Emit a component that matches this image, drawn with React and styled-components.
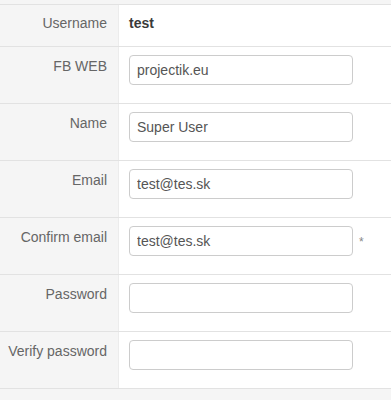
import styled, {createGlobalStyle} from "styled-components";

const GlobalStyle = createGlobalStyle`
  body {
    margin: 0;
    background: #f5f5f5;
    font-family: "Liberation Sans", Arial, sans-serif;
    font-size: 14px;
  }
`;

const Page = styled.div`
  padding-top: 4px;
  width: 391px;
`;

const Table = styled.div`
  border-top: 1px solid #e2e2e2;
  border-bottom: 1px solid #e2e2e2;
`;

const Row = styled.div`
  display: grid;
  grid-template-columns: 119px 1fr;
  height: ${({$h}) => $h}px;
  & + & {
    border-top: 1px solid #e2e2e2;
  }
`;

const Label = styled.div`
  background: #f5f5f5;
  border-right: 1px solid #ececec;
  color: #666;
  text-align: right;
  padding: ${({$top}) => $top}px 11px 0 0;
  line-height: 20px;
`;

const Cell = styled.div`
  background: #fff;
  display: flex;
  align-items: flex-start;
  padding: ${({$top}) => $top}px 0 0 10px;
`;

const Value = styled.span`
  font-weight: bold;
  color: #3a3a3a;
  line-height: 20px;
`;

const Input = styled.input`
  box-sizing: border-box;
  width: 224px;
  height: 30px;
  border: 1px solid #ccc;
  border-radius: 4px;
  padding: 0 7px;
  font-family: inherit;
  font-size: 14px;
  color: #555;
  background: #fff;
  outline: none;
`;

const Required = styled.span`
  color: #888;
  font-size: 12px;
  margin-left: 6px;
  margin-top: 9px;
`;

const fields = [
  {label: "FB WEB", value: "projectik.eu"},
  {label: "Name", value: "Super User"},
  {label: "Email", value: "test@tes.sk"},
  {label: "Confirm email", value: "test@tes.sk", required: true},
  {label: "Password", value: "", type: "password"},
  {label: "Verify password", value: "", type: "password"},
];

export default function App() {
  return (
    <Page>
      <GlobalStyle />
      <Table>
        <Row $h={41}>
          <Label $top={8}>Username</Label>
          <Cell $top={8}>
            <Value>test</Value>
          </Cell>
        </Row>
        {fields.map((f) => (
          <Row key={f.label} $h={56}>
            <Label $top={9}>{f.label}</Label>
            <Cell $top={8}>
              <Input type={f.type || "text"} defaultValue={f.value} readOnly />
              {f.required && <Required>*</Required>}
            </Cell>
          </Row>
        ))}
      </Table>
    </Page>
  );
}
